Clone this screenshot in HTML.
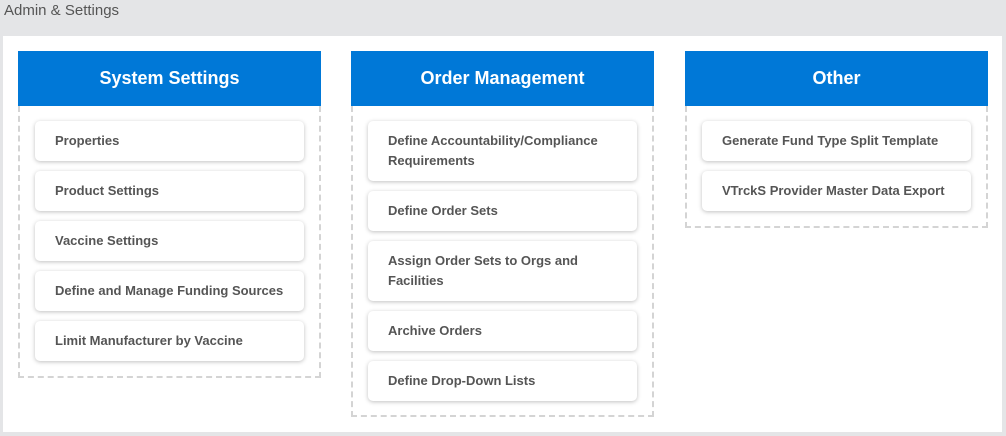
<!DOCTYPE html><html><head><style>
body{margin:0;width:1006px;height:436px;background:#e4e5e7;font-family:"Liberation Sans",sans-serif;position:relative;overflow:hidden}
.t{position:absolute;left:4px;top:2px;font-size:15px;color:#555}
.panel{position:absolute;left:3px;top:36px;width:999px;height:396px;background:#fff}
.col{position:absolute;top:51px;width:303px}
.h{height:55px;background:#0078d7;color:#fff;font-weight:bold;font-size:18px;text-align:center;line-height:55px}
.b{border:2px dashed #d4d4d4;border-top:none;padding:15px 15px 0 15px}
.i{background:#fff;border-radius:5px;box-shadow:0 1px 4px rgba(0,0,0,.25);padding:0 20px;font-size:13px;font-weight:bold;color:#555;height:40px;display:flex;align-items:center;margin-bottom:10px;line-height:20px}
.i.tall{height:60px}
</style></head><body>
<div class="t">Admin &amp; Settings</div>
<div class="panel"></div>
<div class="col" style="left:18px"><div class="h">System Settings</div><div class="b" style="height:255px">
<div class="i">Properties</div><div class="i">Product Settings</div><div class="i">Vaccine Settings</div><div class="i">Define and Manage Funding Sources</div><div class="i">Limit Manufacturer by Vaccine</div></div></div>
<div class="col" style="left:351px"><div class="h">Order Management</div><div class="b" style="height:294px">
<div class="i tall">Define Accountability/Compliance Requirements</div><div class="i">Define Order Sets</div><div class="i tall">Assign Order Sets to Orgs and Facilities</div><div class="i">Archive Orders</div><div class="i">Define Drop-Down Lists</div></div></div>
<div class="col" style="left:685px"><div class="h">Other</div><div class="b" style="height:105px">
<div class="i">Generate Fund Type Split Template</div><div class="i">VTrckS Provider Master Data Export</div></div></div>
</body></html>
